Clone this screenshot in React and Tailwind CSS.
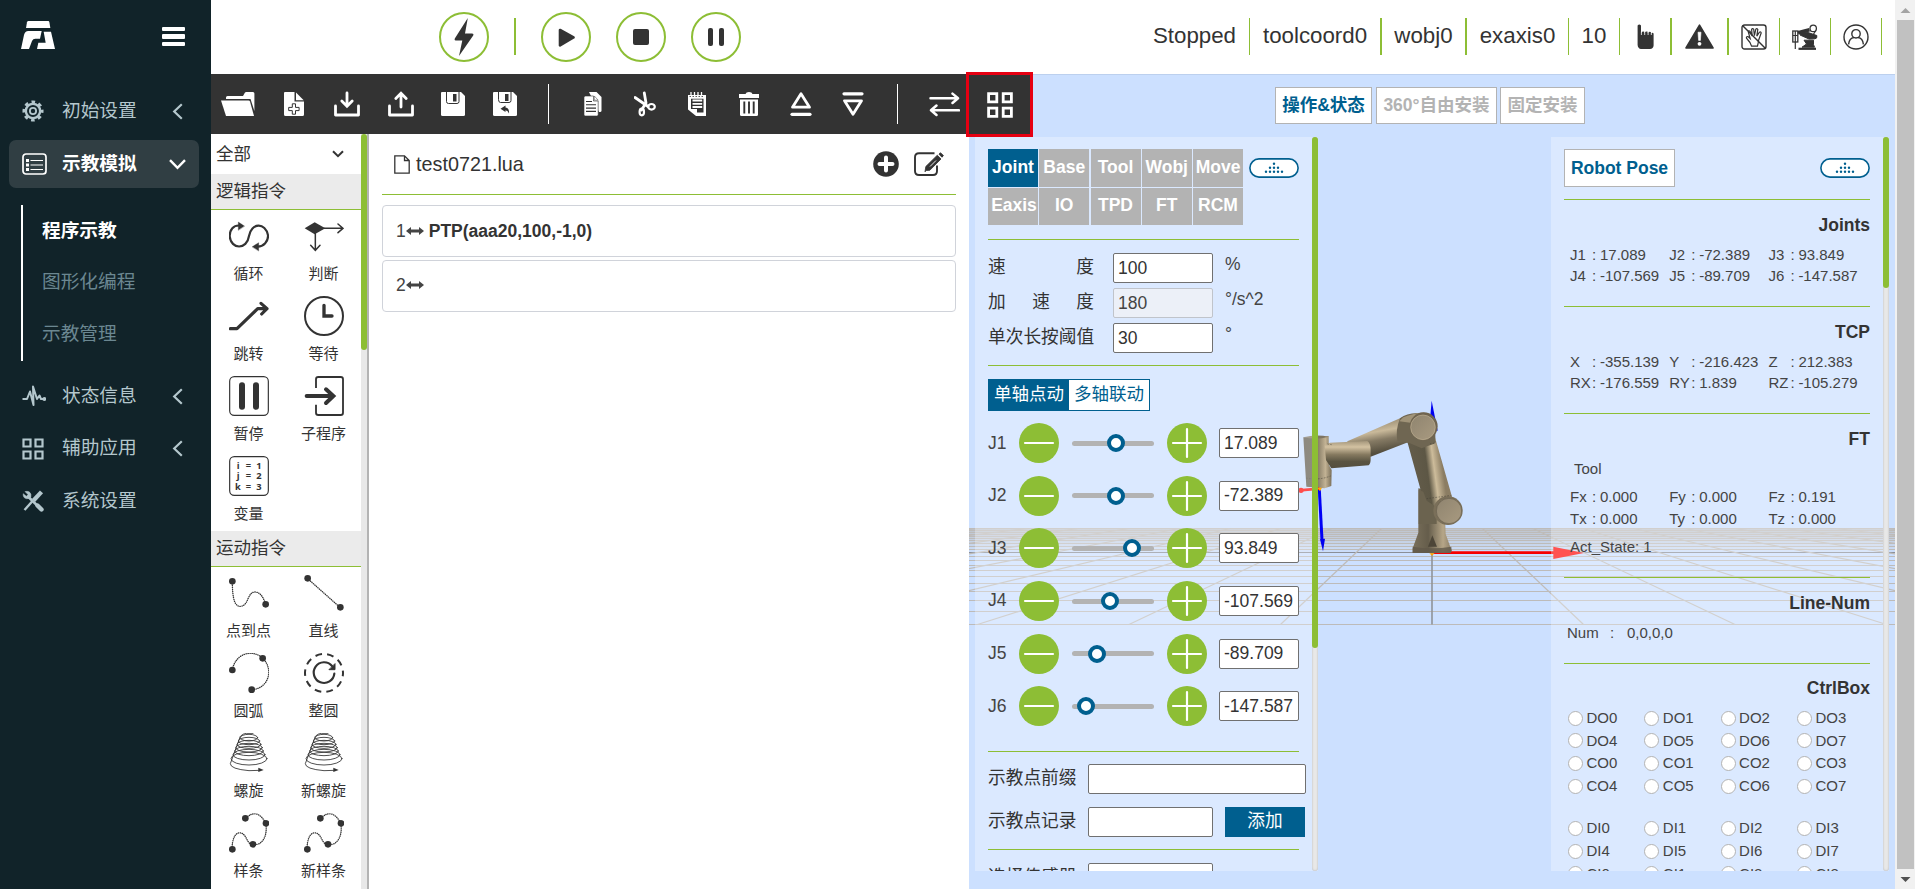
import React from "react";

const FONT = "font-['Liberation_Sans','Noto_Sans_CJK_SC',sans-serif]";

/* ---------- sidebar ---------- */
function Logo() {
  return (
    <svg className="h-[28px] w-[34px]" viewBox="0 0 102 84" fill="#fff">
      <path d="M22 0H82Q84 0 85 3L88 21H15L18 4Q19 0 22 0Z" />
      <path d="M22 30H62L57 53H43Q36 53 33 60L24 84H0L9 42Q12 30 22 30Z" />
      <path d="M68 32H90L102 84H48L52 65H74Z" />
    </svg>
  );
}
const GearIcon = () => (
  <svg className="size-[22px]" viewBox="0 0 24 24" fill="none" stroke="#b4c7cd">
    <circle cx="12" cy="12" r="7.8" strokeWidth="2.6" />
    <circle cx="12" cy="12" r="9.9" strokeWidth="3.2" strokeDasharray="3.9 3.875" strokeDashoffset="1.9" />
    <circle cx="12" cy="12" r="3.4" strokeWidth="2" />
  </svg>
);
const ListIcon = () => (
  <svg className="h-[22px] w-[25px]" viewBox="0 0 25 22" fill="none" stroke="#fff">
    <rect x="1" y="1" width="23" height="20" rx="3" strokeWidth="1.7" />
    <path d="M8.5 7.5H21M8.5 12H21M8.5 16.5H21" strokeWidth="1.2" />
    <path d="M4 7.5H7M4 12H7M4 16.5H7" strokeWidth="3" />
  </svg>
);
const PulseIcon = () => (
  <svg className="h-[22px] w-[24px]" viewBox="0 0 24 22" fill="none" stroke="#b4c7cd" strokeWidth="2" strokeLinejoin="round">
    <path d="M0.5 14H5L8 6.5L11.5 20L11 1.5L15 14L17.5 10.5L19 14H22" />
    <circle cx="22.3" cy="14" r="1" />
  </svg>
);
const SideGridIcon = () => (
  <svg className="size-[22px]" viewBox="0 0 22 22" fill="none" stroke="#b4c7cd" strokeWidth="2.2">
    <path d="M1.500 1.500h7v7h-7zM13.500 1.500h7v7h-7zM1.500 13.500h7v7h-7zM13.500 13.500h7v7h-7z" />
  </svg>
);
const ToolsIcon = () => (
  <svg className="size-[22px]" viewBox="0 0 22 22" fill="none" stroke="#b4c7cd">
    <path d="M6.5 7L16 16.2" strokeWidth="2.6" />
    <path d="M15.5 15.5L19.5 19.5" strokeWidth="4.4" strokeLinecap="round" />
    <path d="M3 1.6Q7.5 0.4 8.9 4.2Q9.6 6.8 7.6 8.2Q4.6 9.6 2.2 7.6Q0.9 6 1.2 3.7L4.4 6.3L6 4.6Z" fill="#b4c7cd" strokeWidth="0.5" />
    <path d="M2.5 20L11 10.5" strokeWidth="2.4" />
    <path d="M11.5 10.5L19.5 1.8" strokeWidth="4.2" />
  </svg>
);
const ChevLeft = () => (
  <svg className="h-[17px] w-[11px]" viewBox="0 0 11 17" fill="none" stroke="#b4c7cd" strokeWidth="2.2">
    <path d="M9.8 1.2L2.2 8.5L9.8 15.8" />
  </svg>
);

function SideItem({ icon, label, chevron, className }) {
  return (
    <div className={"flex items-center pl-[22px] " + className}>
      <span className="flex w-[40px]">{icon}</span>
      <span className="w-[110px] text-[18.7px] leading-none text-[#b4c7cd]">{label}</span>
      {chevron && <ChevLeft />}
    </div>
  );
}

function Sidebar() {
  return (
    <aside className="flex w-[211px] shrink-0 flex-col bg-[#112329]">
      <div className="flex h-[82px] items-start justify-between pt-[21px] pr-[26px] pl-[21px]">
        <Logo />
        <div className="mt-[6px] flex flex-col gap-[3px]">
          <i className="h-[4.4px] w-[23px] rounded-[1px] bg-white" />
          <i className="h-[4.4px] w-[23px] rounded-[1px] bg-white" />
          <i className="h-[4.4px] w-[23px] rounded-[1px] bg-white" />
        </div>
      </div>
      <SideItem icon={<GearIcon />} label="初始设置" chevron className="h-[58px]" />
      <div className="ml-[9px] flex h-[48px] w-[190px] items-center rounded-[7px] bg-[#303e43] pl-[13px]">
        <span className="flex w-[40px]"><ListIcon /></span>
        <span className="w-[107px] text-[18.7px] leading-none font-bold text-white">示教模拟</span>
        <svg className="h-[11px] w-[17px]" viewBox="0 0 17 11" fill="none" stroke="#fff" strokeWidth="2.4">
          <path d="M1 1.2L8.5 8.8L16 1.2" />
        </svg>
      </div>
      <div className="mt-[17px] ml-[21px] flex h-[156px] flex-col border-l-2 border-white pl-[19px] text-[18.7px] text-[#6b8791]">
        <span className="flex h-[51.5px] items-center font-bold text-white">程序示教</span>
        <span className="flex h-[51.5px] items-center">图形化编程</span>
        <span className="flex h-[51.5px] items-center">示教管理</span>
      </div>
      <SideItem icon={<PulseIcon />} label="状态信息" chevron className="mt-[9px] h-[52px]" />
      <SideItem icon={<SideGridIcon />} label="辅助应用" chevron className="h-[53px]" />
      <SideItem icon={<ToolsIcon />} label="系统设置" className="h-[52px]" />
    </aside>
  );
}

/* ---------- header ---------- */
function RoundButton({ children, className }) {
  return (
    <div className={"flex size-[50px] items-center justify-center rounded-full border-2 border-[#8dbe35] " + (className || "")}>
      {children}
    </div>
  );
}
const HandIcon = () => (
  <svg className="h-[25px] w-[17px]" viewBox="0 0 17 25" fill="#333">
    <path d="M0.600 1.500Q2.300 -0.500 4 1.500V9L5.200 7.800Q6.200 7 7.200 7.800V9L8.500 7.800Q9.700 7 10.700 7.800V9L12 8Q13 7.400 14 8.200V9.500Q15.500 8 16.600 9.500V21.500Q16.300 24.700 13 25H4Q1 24.700 0.600 21Z" />
    <path d="M4.400 7.500V11M7.700 8V11M11.100 8V11M14.300 8.500V11" stroke="#fff" strokeWidth="0.800" />
  </svg>
);
const WarnIcon = () => (
  <svg className="h-[25px] w-[29px]" viewBox="0 0 29 25">
    <path d="M14.5 1.2L28 24H1Z" fill="#333" stroke="#333" strokeWidth="1.6" strokeLinejoin="round" />
    <path d="M13 8.2h3l-.6 8.2h-1.8z" fill="#fff" stroke="#fff" strokeWidth="0.6" />
    <circle cx="14.5" cy="19.8" r="1.9" fill="#fff" />
  </svg>
);
const NoHandIcon = () => (
  <svg className="h-[26px] w-[26px]" viewBox="0 0 26 26" fill="none" stroke="#333" strokeWidth="1.4">
    <rect x="1" y="1" width="24" height="24" rx="2.5" />
    <path d="M1.5 1.5L24.5 24.5" />
    <path strokeWidth="1.2" d="M9 18.5L5.5 14.2Q5 12.2 7 12.6L9.2 14.6L7.3 8Q7.6 6.2 9 7.2L11.2 12L10.6 5.4Q11.4 3.8 12.7 5.2L13.4 11.6L14.8 5.2Q16 4 16.8 5.6L15.8 12.2L18.4 8.2Q20 7.4 20.2 9L17.6 16.2Q17.2 19.6 16.4 22.2H10.6Z" />
  </svg>
);
const RobotIcon = () => (
  <svg className="h-[26px] w-[26px]" viewBox="0 0 26 26" fill="none" stroke="#333">
    <rect x="0.800" y="7" width="5" height="11" strokeWidth="1.300" />
    <path d="M3.300 7V25M0.800 11.500H5.800" strokeWidth="1.200" />
    <path d="M6 8.800L17.500 5.800" strokeWidth="3.600" />
    <circle cx="21.200" cy="4.400" r="3.200" strokeWidth="1.300" />
    <path d="M23.500 7L21 11" strokeWidth="1.300" />
    <path d="M9 7.500L16 8.500L24.800 11.500Q25.500 14.500 23 14.800L17 15L8 11Z" fill="#333" />
    <path d="M12 16.200H21.500V20.500L22.500 23.200H10L14.500 20Z" fill="#333" />
    <path d="M6.500 24.800H24" strokeWidth="2.200" />
  </svg>
);
const UserIcon = () => (
  <svg className="h-[26px] w-[26px]" viewBox="0 0 26 26" fill="none" stroke="#333" strokeWidth="1.4">
    <circle cx="13" cy="13" r="12" />
    <circle cx="13" cy="9.800" r="4.200" />
    <path d="M5.600 20.400Q6.200 14 11 13.500M15 13.500Q19.800 14 20.400 20.400" />
  </svg>
);

function StatusCell({ children, className }) {
  return <div className={"flex h-[37px] items-center justify-center border-[#8dbe35] " + className}>{children}</div>;
}

function Header() {
  return (
    <header className="flex h-[74px] shrink-0 items-start bg-white">
      <div className="mt-[12px] ml-[228px] flex">
        <RoundButton>
          <svg className="h-[38px] w-[20px]" viewBox="0 0 20 38" fill="#333">
            <path d="M13.8 0L0.8 20.5Q0 22.4 1.6 22.4H8.3L5 38L19.2 17.6Q20 15.6 18 15.6H11Z" />
          </svg>
        </RoundButton>
        <i className="mt-[6px] ml-[25px] h-[37px] w-[2px] bg-[#8dbe35]" />
        <RoundButton className="ml-[25px]">
          <svg className="h-[19px] w-[17px]" viewBox="0 0 17 19">
            <path d="M2 2L15.5 9.5L2 17.4Z" fill="#333" stroke="#333" strokeWidth="2.6" strokeLinejoin="round" />
          </svg>
        </RoundButton>
        <RoundButton className="ml-[25px]">
          <i className="size-[16px] rounded-[2px] bg-[#333]" />
        </RoundButton>
        <RoundButton className="ml-[25px]">
          <span className="flex gap-[6px]">
            <i className="h-[18px] w-[5px] rounded-[2px] bg-[#333]" />
            <i className="h-[18px] w-[5px] rounded-[2px] bg-[#333]" />
          </span>
        </RoundButton>
      </div>
      <div className="mt-[18px] mr-[13px] ml-auto flex text-[22.3px] leading-none text-[#333]">
        <StatusCell className="w-[110px] border-r">Stopped</StatusCell>
        <StatusCell className="w-[132px] border-r-2">toolcoord0</StatusCell>
        <StatusCell className="w-[85px] border-r-2">wobj0</StatusCell>
        <StatusCell className="w-[102px] border-r">exaxis0</StatusCell>
        <StatusCell className="w-[51px] border-r">10</StatusCell>
        <StatusCell className="w-[52px] border-r-2"><HandIcon /></StatusCell>
        <StatusCell className="w-[57px] border-r-2"><WarnIcon /></StatusCell>
        <StatusCell className="w-[51px] border-r"><NoHandIcon /></StatusCell>
        <StatusCell className="w-[51px] border-r"><RobotIcon /></StatusCell>
        <StatusCell className="w-[51px] border-r"><UserIcon /></StatusCell>
      </div>
    </header>
  );
}

/* ---------- toolbar ---------- */
const Tb = ({ w, gap, children }) => (
  <svg className={"h-[26px] shrink-0 " + gap} width={w} height="26" viewBox={`0 0 ${w} 26`} fill="#fff">
    {children}
  </svg>
);

function Toolbar() {
  const dark = "#333";
  return (
    <div className="flex h-[60px] shrink-0 items-center bg-[#333] pb-[1px] pl-[10px]">
      <Tb w={34} gap="">
        <path d="M5 6.5Q5 5 6.5 5H22L24 1.5Q24.3 1 25.3 1H32Q33.4 1 33.4 2.6V20L29.5 8H5Z" />
        <path d="M0 9.5H27.5Q28.6 9.5 29 10.6L33 25H5Z" />
      </Tb>
      <Tb w={20} gap="ml-[29px]">
        <path d="M1 1H10.5V10.5H20V23.5Q20 25 18.5 25H1.5Q0 25 0 23.5V2Q0 1 1 1Z" />
        <path d="M12 1.4L19.7 9.2H12Z" />
        <path d="M8.3 12.8h3.2v3.6h3.6v3.2h-3.6v3.6h-3.2v-3.6H4.700v-3.200h3.600z" fill="none" stroke={dark} strokeWidth="1" />
      </Tb>
      <Tb w={26} gap="ml-[30px]">
        <path d="M1.500 15V24H24.500V15" fill="none" stroke="#fff" strokeWidth="2.8" strokeLinecap="round" strokeLinejoin="round" />
        <path d="M13 2V14M7.800 10L13 15.200L18.200 10" fill="none" stroke="#fff" strokeWidth="2.800" strokeLinecap="round" />
      </Tb>
      <Tb w={26} gap="ml-[28px]">
        <path d="M1.500 15V24H24.500V15" fill="none" stroke="#fff" strokeWidth="2.800" strokeLinecap="round" strokeLinejoin="round" />
        <path d="M13 16V4M7.800 7.500L13 2.200L18.200 7.500" fill="none" stroke="#fff" strokeWidth="2.800" strokeLinecap="round" />
      </Tb>
      <Tb w={24} gap="ml-[27px]">
        <path d="M1 1H20L24 5V23.500Q24 25 22.500 25H1.500Q0 25 0 23.500V2Q0 1 1 1Z" />
        <path d="M5.500 1V10.500Q5.500 12.500 7.500 12.500H16Q18 12.500 18 10.500V1" fill="none" stroke={dark} strokeWidth="1" />
        <rect x="12" y="3" width="3.500" height="7.500" fill={dark} />
      </Tb>
      <Tb w={24} gap="ml-[28px]">
        <path d="M1 1H20L24 5V23.500Q24 25 22.500 25H1.500Q0 25 0 23.500V2Q0 1 1 1Z" />
        <path d="M5.500 1V8.500Q5.500 11.500 7.500 11.500H16Q18 11.500 18 9.500V1" fill="none" stroke={dark} strokeWidth="1" />
        <rect x="12" y="3" width="3.500" height="7" fill={dark} />
        <path d="M7.500 17.800L12.500 14.500V16.500Q16.500 17 16 22.500Q15 19.500 12.500 19.200V21Z" fill={dark} />
      </Tb>
      <i className="ml-[31px] h-[40px] w-px shrink-0 bg-white" />
      <Tb w={18} gap="ml-[35px]">
        <path d="M5 1H12.500L17.500 6V19.500Q17.500 21 16 21H15" />
        <path d="M0 6.500Q0 5 1.500 5H9.500V10H14.200V23.500Q14.200 25 12.700 25H1.500Q0 25 0 23.500Z" stroke={dark} strokeWidth="0.600" />
        <path d="M10.300 5L14.200 9.200H10.300Z" stroke={dark} strokeWidth="0.500" />
        <path d="M2 10.500H8M2 13.800H12M2 17.100H12M2 20.400H12" stroke={dark} strokeWidth="1.100" />
      </Tb>
      <Tb w={22} gap="ml-[32px]">
        <path d="M1 6.500L14 15.500M10.300 2L12 12L7.500 19" fill="none" stroke="#fff" strokeWidth="2.800" strokeLinecap="round" />
        <ellipse cx="7.800" cy="21" rx="2.200" ry="3.300" fill="none" stroke="#fff" strokeWidth="2.200" />
        <ellipse cx="17.500" cy="15.800" rx="3.300" ry="2.800" fill="none" stroke="#fff" strokeWidth="2.200" />
      </Tb>
      <Tb w={18} gap="ml-[32px]">
        <path d="M0 4H18V25H8L0 18.500Z" />
        <path d="M3 1V6M6.500 1V6M10 1V6M13.500 1V6" stroke="#fff" strokeWidth="1.300" />
        <path d="M1.500 5.500H16" stroke={dark} strokeWidth="0.800" strokeDasharray="1.500 1.500" />
        <path d="M3 7.800H15.500V21.500H9V18H3Z" fill={dark} />
        <path d="M4.500 9.500H14.200M4.500 12.800H14.200M4.500 16H14.200" stroke="#fff" strokeWidth="1.800" />
      </Tb>
      <Tb w={20} gap="ml-[33px]">
        <path d="M0 3H6.500Q7 1 10 1T13.500 3H20V7H0Z" />
        <path d="M1 8.500H19V23.500Q19 25 17.500 25H2.500Q1 25 1 23.500Z" />
        <path d="M5.300 10.500V22.500M10 10.500V22.500M14.700 10.500V22.500" stroke={dark} strokeWidth="1.900" />
      </Tb>
      <Tb w={22} gap="ml-[31px]">
        <path d="M11 2.800L19.500 16.200H2.500Z" fill="none" stroke="#fff" strokeWidth="2.800" strokeLinejoin="round" />
        <path d="M2 23.300H20" stroke="#fff" strokeWidth="3.200" strokeLinecap="round" />
      </Tb>
      <Tb w={22} gap="ml-[30px]">
        <path d="M2 2.800H20" stroke="#fff" strokeWidth="3.200" strokeLinecap="round" />
        <path d="M11 23.300L2.500 9.800H19.500Z" fill="none" stroke="#fff" strokeWidth="2.800" strokeLinejoin="round" />
      </Tb>
      <i className="ml-[33px] h-[40px] w-px shrink-0 bg-white" />
      <Tb w={31} gap="ml-[31px]">
        <path d="M1.500 7.300H28M23.500 2.600L29 7.300L23.500 12M30 19.300H3M7.500 14.500L2 19.300L7.500 24" fill="none" stroke="#fff" strokeWidth="2.500" strokeLinecap="round" strokeLinejoin="round" />
      </Tb>
    </div>
  );
}

/* ---------- command library ---------- */
const S = ({ children }) => (
  <svg className="size-[40px]" viewBox="0 0 120 120" fill="none" stroke="#333" strokeLinecap="round">
    {children}
  </svg>
);
const dot = (x, y) => <circle key={x + "-" + y} cx={x} cy={y} r="10" fill="#333" stroke="none" />;

const Spiral = () => (
  <S>
    <g strokeWidth="2.600">
      <ellipse cx="60" cy="14" rx="26" ry="10" />
      <ellipse cx="60" cy="24" rx="32" ry="11" />
      <ellipse cx="60" cy="34" rx="36" ry="12" />
      <ellipse cx="60" cy="44" rx="40" ry="13" />
      <ellipse cx="60" cy="54" rx="43" ry="14" />
      <ellipse cx="60" cy="65" rx="48" ry="16" />
      <ellipse cx="60" cy="77" rx="54" ry="19" />
      <path d="M36 8Q42 2 52 1H72" />
      <path d="M34 10L4 92Q4 108 60 113L92 112" />
    </g>
    <path d="M104 111L88 104V117Z" fill="#333" stroke="none" />
  </S>
);
const Spline = () => (
  <S>
    <path d="M9 108C10 50 40 50 52 76C64 100 70 94 86 94C112 84 114 50 110 30C92 -4 70 -4 50 16" strokeWidth="4" strokeDasharray="1 5" />
    {dot(10, 109)}{dot(72, 94)}{dot(111, 31)}{dot(49, 16)}
  </S>
);

const LOGIC = [
  ["循环", <S key="a"><g strokeWidth="6.500">
    <path d="M36 29C12 25 2 44 2 60C6 102 54 102 60 60C66 20 110 18 117 58C118 76 104 92 86 92" />
    <path d="M46 30L28 18V42Z" fill="#333" strokeWidth="1" /><path d="M70 92L89 80V104Z" fill="#333" strokeWidth="1" /></g></S>],
  ["判断", <S key="b"><path d="M2 37L32 19L64 37L32 55Z" fill="#333" stroke="none" />
    <path d="M60 37H116M102 24L117 37L102 50M34 50V102M20 88L34 103L48 88" strokeWidth="4.500" /></S>],
  ["跳转", <S key="c"><path d="M4 98H24L86 38H112M96 22L114 38L98 54" strokeWidth="9.500" strokeLinejoin="round" /></S>],
  ["等待", <S key="d"><circle cx="60" cy="60" r="57" strokeWidth="6" /><path d="M60 28V60H84" strokeWidth="10" /></S>],
  ["暂停", <S key="e"><rect x="2" y="2" width="116" height="116" rx="14" strokeWidth="3.500" /><path d="M39 28V92M81 28V92" strokeWidth="18" /></S>],
  ["子程序", <S key="f"><path d="M36 36V10Q36 3 43 3H110Q117 3 117 10V110Q117 117 110 117H43Q36 117 36 110V86" strokeWidth="5.500" strokeLinecap="butt" />
    <path d="M8 60H84M66 40L88 60L66 81" strokeWidth="12" /></S>],
  ["变量", <svg key="g" className="size-[40px]" viewBox="0 0 120 120">
    <rect x="2" y="2" width="116" height="116" rx="14" fill="none" stroke="#333" strokeWidth="3.500" />
    <g fill="#333" fontFamily="Open Sans" fontWeight="700" fontSize="28">
      <text x="23" y="38">i</text><text x="50" y="38">=</text><text x="82" y="38">1</text>
      <text x="23" y="70">j</text><text x="50" y="70">=</text><text x="82" y="70">2</text>
      <text x="18" y="102">k</text><text x="50" y="102">=</text><text x="82" y="102">3</text>
    </g>
  </svg>],
];
const MOTION = [
  ["点到点", <S key="a"><path d="M10 25C10 80 18 102 36 100C60 96 54 58 78 57C96 58 104 76 110 94" strokeWidth="4" strokeDasharray="1 5" />{dot(10, 25)}{dot(110, 94)}</S>],
  ["直线", <S key="b"><path d="M10 16L108 103" strokeWidth="4" strokeDasharray="1 5" />{dot(11, 16)}{dot(109, 103)}</S>],
  ["圆弧", <S key="c"><path d="M10 50C20 0 70 -12 101 15C136 50 118 108 68 110" strokeWidth="4" strokeDasharray="1 5" />{dot(10, 51)}{dot(101, 16)}{dot(68, 110)}</S>],
  ["整圆", <S key="d"><circle cx="60" cy="60" r="57" strokeWidth="6" strokeDasharray="20 15.810" strokeDashoffset="10" strokeLinecap="butt" />
    <path d="M84 39A31 31 0 1 0 91 62" strokeWidth="6.500" /><path d="M93 33V50H76Z" fill="#333" strokeWidth="3" /></S>],
  ["螺旋", <Spiral key="e" />],
  ["新螺旋", <Spiral key="f" />],
  ["样条", <Spline key="g" />],
  ["新样条", <Spline key="h" />],
];

function CommandGroup({ title, items }) {
  return (
    <section className="pb-px">
      <h3 className="flex h-[36px] items-center border-b border-[#8dbe35] bg-[#ebebeb] pl-[5px] text-[17.5px] text-[#333]">{title}</h3>
      <div className="grid grid-cols-[75px_75px]">
        {items.map(([label, icon]) => (
          <div key={label} className="flex h-[80px] flex-col items-center pt-[6px]">
            {icon}
            <span className="mt-[10px] text-[15px] leading-[16px] text-[#333]">{label}</span>
          </div>
        ))}
      </div>
    </section>
  );
}

function Library() {
  return (
    <div className="flex w-[158px] shrink-0 overflow-hidden border-r-2 border-[#b3b3b3] bg-white">
      <div className="w-[150px]">
        <div className="flex h-[40px] items-center justify-between pr-[17px] pl-[5px] text-[17.5px] text-[#333]">
          全部
          <svg className="h-[8px] w-[12px]" viewBox="0 0 12 8" fill="none" stroke="#333" strokeWidth="2"><path d="M1 1.200L6 6.200L11 1.200" /></svg>
        </div>
        <CommandGroup title="逻辑指令" items={LOGIC} />
        <CommandGroup title="运动指令" items={MOTION} />
      </div>
      <div className="w-[6px] bg-[#e8e8e8]">
        <div className="h-[216px] w-[6px] rounded-full bg-[#8dbe35]" />
      </div>
    </div>
  );
}

/* ---------- editor ---------- */
const MoveGlyph = () => (
  <svg className="h-[8px] w-[18px]" viewBox="0 0 18 8" fill="#444">
    <path d="M0 4L5 0V2.600H13V0L18 4L13 8V5.400H5V8Z" />
  </svg>
);

function Editor() {
  return (
    <div className="flex grow flex-col bg-white px-[13px]">
      <div className="flex h-[61px] items-center border-b border-[#8dbe35] pl-[12px]">
        <svg className="mt-[1px] h-[19px] w-[16px]" viewBox="0 0 16 19" fill="none" stroke="#333" strokeWidth="1.300">
          <path d="M0.800 0.800H10.500L15.200 5.500V18.200H0.800ZM10.500 0.800V5.500H15.200" />
        </svg>
        <span className="mt-[2px] ml-[6px] text-[19.800px] leading-none text-[#333]">test0721.lua</span>
        <svg className="ml-auto size-[26px]" viewBox="0 0 26 26">
          <circle cx="13" cy="13" r="12.800" fill="#333" />
          <path d="M13 6.500V19.500M6.500 13H19.500" stroke="#fff" strokeWidth="4" strokeLinecap="round" />
        </svg>
        <svg className="mr-[12px] ml-[15px] h-[26px] w-[30px]" viewBox="0 0 30 26" fill="none" stroke="#333">
          <path d="M20.500 2.200H5Q1 2.200 1 6.200V20Q1 24 5 24H19Q23 24 23 20V14.500" strokeWidth="1.900" />
          <path d="M12.300 19.500L11 20.800L11.800 15.500L23.300 4.200L27 8L15.800 19.300Z" fill="#333" strokeWidth="0.800" />
          <path d="M25 3.200L26.500 1.800L29.300 4.600L28 6.200Z" fill="#333" strokeWidth="1" />
          <path d="M16 15.500L22 9.500" stroke="#fff" strokeWidth="0.900" />
        </svg>
      </div>
      <div className="mt-[10px] flex h-[52px] items-center rounded-[4px] border border-[#d0d3da] pl-[13px] text-[17.5px] text-[#444]">
        1<MoveGlyph />
        <b className="ml-[5px] text-[#333]">PTP(aaa20,100,-1,0)</b>
      </div>
      <div className="mt-[3px] flex h-[52px] items-center rounded-[4px] border border-[#d0d3da] pb-[2px] pl-[13px] text-[17.5px] text-[#444]">
        2<MoveGlyph />
      </div>
    </div>
  );
}

/* ---------- 3D scene ---------- */
const rows = Array.from({ length: 21 }, (_, n) => n);
const cols = Array.from({ length: 21 }, (_, k) => k - 10);

function Scene() {
  return (
    <svg className="absolute -top-px left-0" width="926" height="815" viewBox="969 74 926 815">
      <defs>
        <linearGradient id="wrist" x1="0" x2="1"><stop offset="0" stopColor="#5c574a" /><stop offset=".3" stopColor="#5f5948" /><stop offset=".5" stopColor="#857b65" /><stop offset=".78" stopColor="#c2b294" /><stop offset="1" stopColor="#7a6f59" /></linearGradient>
        <linearGradient id="fore" x1="0" x2="0" y1="0" y2="1"><stop offset="0" stopColor="#a5977c" /><stop offset=".22" stopColor="#d3c2a2" /><stop offset=".5" stopColor="#85795f" /><stop offset=".75" stopColor="#5a5442" /><stop offset="1" stopColor="#544e3e" /></linearGradient>
        <linearGradient id="fore2" x1=".4" x2=".6" y1=".2" y2=".85"><stop offset="0" stopColor="#9c8f75" /><stop offset=".32" stopColor="#c9b99a" /><stop offset=".6" stopColor="#857a64" /><stop offset="1" stopColor="#544e3e" /></linearGradient>
        <linearGradient id="upper" x1=".2" x2=".8" y1=".55" y2=".4"><stop offset="0" stopColor="#625b49" /><stop offset=".45" stopColor="#5d5745" /><stop offset=".7" stopColor="#cdbc9b" /><stop offset="1" stopColor="#8b7d63" /></linearGradient>
        <linearGradient id="base" x1="0" x2="1"><stop offset="0" stopColor="#7a705b" /><stop offset=".4" stopColor="#655d4b" /><stop offset=".78" stopColor="#b6a688" /><stop offset="1" stopColor="#8a7d66" /></linearGradient>
        <linearGradient id="cap" x1="0" x2="1" y1="0" y2="1"><stop offset="0" stopColor="#8f846f" /><stop offset="1" stopColor="#a89a80" /></linearGradient>
        <linearGradient id="haze" x1="0" x2="0" y1="0" y2="1"><stop offset="0" stopColor="#b9b9b9" stopOpacity=".75" /><stop offset="1" stopColor="#b9b9b9" stopOpacity="0" /></linearGradient>
      </defs>
      <rect x="969" y="528" width="926" height="26" fill="url(#haze)" />
      {rows.map((n) => {
        const y = Math.round(480.5 + 143.5 / (1 + 0.1 * n)) + 0.5;
        return <path key={n} d={`M969 ${y}H1895`} stroke={n === 10 ? "#8a8f98" : "#bdbbb9"} strokeWidth="1" />;
      })}
      {cols.map((k) => (
        <path key={k} d={`M${1432 + 50.5 * k} 528.500L${1432 + 151.5 * k} 624.500`} stroke={k === 0 ? "#8f9399" : "#bfbcb9"} strokeWidth={k === 0 ? 1.6 : 1.2} />
      ))}
      <g transform="translate(1290 380) scale(.33333)">
        <path d="M425 62L443 152H417Z" fill="#0000f0" />
        <path d="M430 518H792" stroke="#f60000" strokeWidth="8" />
        <path d="M790 500L882 519L790 537Z" fill="#ff0808" />
        {/* base and shoulder */}
        <path d="M385 325L410 330L466 435L467 462L485 512L482 518L368 519L368 505L385 458Z" fill="url(#base)" />
        <path d="M427 466L441 500H414Z" fill="#4d4638" />
        <path d="M368 500Q425 510 484 500L485 512L482 519L368 519Z" fill="#62594a" opacity=".8" />
        {/* upper arm */}
        <path d="M352 185L435 172L486 350L440 420Q400 400 392 330Z" fill="url(#upper)" />
        <path d="M386 330L400 335L410 362L440 382L440 432H386Z" fill="#6b634f" />
        <ellipse cx="474" cy="392" rx="44" ry="43" fill="#7a6f59" />
        <circle cx="477" cy="393" r="38" fill="url(#cap)" stroke="#5c5342" strokeWidth="1.500" />
        {/* forearm */}
        <path d="M172 184L330 115Q360 98 402 98L395 180L350 188L242 230L170 215Z" fill="url(#fore2)" />
        <path d="M330 115Q316 150 322 182L356 188L395 205L436 190V160L380 100Q350 100 330 115Z" fill="#6f6652" />
        <path d="M340 112Q370 98 405 98L372 130L328 124Z" fill="#a09378" />
        <circle cx="401" cy="139" r="42" fill="#6f6450" />
        <circle cx="399" cy="142" r="37" fill="url(#cap)" stroke="#d0c0a0" strokeWidth="1.500" />
        {/* wrist */}
        <path d="M40 172L116 168L117 255L125 270L124 318L104 325L49 320Z" fill="url(#wrist)" />
        <path d="M104 196L120 188L232 183Q243 190 242 215V238Q242 252 236 256L124 265L108 240Z" fill="url(#fore)" />
        <path d="M40 172Q78 162 116 170Q80 180 40 172Z" fill="#7d7462" />
        <path d="M48 294Q85 302 122 288M112 192L125 194M420 190Q425 196 438 184M410 356Q440 352 484 346" fill="none" stroke="#3f3a30" strokeWidth="1.500" strokeDasharray="5 4" />
        <path d="M28 331L88 326" stroke="#ff0000" strokeWidth="8" />
        <circle cx="33" cy="331" r="8" fill="#ff0000" />
        <path d="M88 330L96 480" stroke="#0000f6" strokeWidth="9" />
        <path d="M90 478L105 476L99 514Z" fill="#0000f0" />
        <path d="M82 323H96L90 334ZM418 520H434L426 527Z" fill="#ffa500" />
      </g>
    </svg>
  );
}

/* ---------- panels ---------- */
const Oval = () => (
  <svg className="h-[20px] w-[50px]" viewBox="0 0 50 20" fill="#005f8f">
    <rect x="0.900" y="0.900" width="48.200" height="18.200" rx="9.100" fill="#fff" stroke="#005f8f" strokeWidth="1.600" />
    {[17, 21, 25, 29, 33].map((x) => <circle key={x} cx={x} cy="13.800" r="1.200" />)}
    {[21, 25, 29].map((x) => <circle key={x} cx={x} cy="9.800" r="1.200" />)}
    <circle cx="25" cy="5.800" r="1.200" />
  </svg>
);

const FIELD = "h-[30px] rounded-[2px] border border-[#707070] bg-white pl-[4px] text-[17.5px] leading-none text-[#333] outline-none ";

function Spread({ text }) {
  return (
    <span className="flex w-[106px] justify-between text-[17.7px] leading-none text-[#333]">
      {text.split("").map((c) => <span key={c}>{c}</span>)}
    </span>
  );
}

const FIELDS = [["速度", "100", "%", "on"], ["加速度", "180", "°/s^2", "off"], ["单次长按阈值", "30", "°", "on"]];
const JOINTS = [["J1", "17.089", 35], ["J2", "-72.389", 35], ["J3", "93.849", 51], ["J4", "-107.569", 28.5], ["J5", "-89.709", 15.5], ["J6", "-147.587", 4.5]];

function Sign({ plus }) {
  return (
    <svg className="size-[40px]" viewBox="0 0 40 40">
      <circle cx="20" cy="20" r="20" fill="#8dbe35" />
      <path d={plus ? "M6 20H34M20 6V34" : "M6 20H34"} stroke="#fff" strokeWidth="2.200" strokeLinecap="round" />
    </svg>
  );
}

function JogPanel() {
  return (
    <div className="relative flex h-[734px] w-[343px] overflow-hidden bg-white/30">
      <div className="flex w-[337px] shrink-0 flex-col pt-[12px] pl-[13px]">
        <div className="flex h-[76px] shrink-0">
          <div className="grid grid-cols-[50px_50px_50px_50px_50px] grid-rows-[38px_37px] gap-x-[1.250px] gap-y-px text-[17.5px] font-bold text-white">
            {["Joint", "Base", "Tool", "Wobj", "Move", "Eaxis", "IO", "TPD", "FT", "RCM"].map((t, i) => (
              <span key={t} className={"flex items-center justify-center pb-[2px] " + (i === 0 ? "bg-[#005f8f]" : "bg-[#b3b3b3]") + (i === 5 ? " pl-[2px]" : "")}>{t}</span>
            ))}
          </div>
          <div className="mt-[9px] ml-[6px]"><Oval /></div>
        </div>
        <i className="mt-[14px] h-px w-[311px] shrink-0 bg-[#8dbe35]" />
        <div className="mt-[13px] flex shrink-0 flex-col gap-[5px]">
          {FIELDS.map(([l, v, u, k]) => (
            <div key={l} className="flex h-[30px] items-center">
              <Spread text={l} />
              <input readOnly defaultValue={v} className={"ml-[19px] w-[100px] shrink-0 " + (k === "off" ? "h-[30px] rounded-[2px] border border-[#c0c4cb] bg-[#ecf0f8] pl-[4px] text-[17.5px] leading-none text-[#444] outline-none" : FIELD)} />
              <span className="mb-[6px] ml-[12px] text-[17.5px] leading-none text-[#444]">{u}</span>
            </div>
          ))}
        </div>
        <i className="mt-[12px] h-px w-[311px] shrink-0 bg-[#8dbe35]" />
        <div className="mt-[13px] flex h-[32px] w-[162px] shrink-0 border border-[#005f8f] bg-white text-[17.5px] text-[#005f8f]">
          <span className="flex w-[80px] items-center justify-center bg-[#005f8f] pb-[1px] text-white">单轴点动</span>
          <span className="flex w-[80px] items-center justify-center pb-[1px]">多轴联动</span>
        </div>
        <div className="mt-[6px] flex shrink-0 flex-col">
          {JOINTS.map(([j, v, p]) => (
            <div key={j} className="flex h-[52.600px] items-center">
              <span className="w-[31px] text-[17.5px] leading-none text-[#444]">{j}</span>
              <Sign />
              <div className="relative mx-[13px] h-[5px] w-[82px] rounded-full bg-[#b3b3b3]">
                <i className="absolute top-[-6.500px] size-[18px] rounded-full border-4 border-[#005f8f] bg-white" style={{ left: p }} />
              </div>
              <Sign plus />
              <input readOnly defaultValue={v} className={"ml-[12px] w-[80px] " + FIELD} />
            </div>
          ))}
        </div>
        <i className="mt-[18px] h-px w-[311px] shrink-0 bg-[#8dbe35]" />
        <div className="mt-[12.500px] flex h-[30px] shrink-0 items-center">
          <span className="w-[100px] text-[17.7px] leading-none text-[#333]">示教点前缀</span>
          <input readOnly className={"w-[218px] " + FIELD} />
        </div>
        <div className="mt-[13px] flex h-[30px] shrink-0 items-center">
          <span className="w-[100px] text-[17.7px] leading-none text-[#333]">示教点记录</span>
          <input readOnly className={"w-[125px] " + FIELD} />
          <span className="ml-[12px] flex h-[30px] w-[80px] items-center justify-center bg-[#005f8f] pb-[2px] text-[17.7px] text-white">添加</span>
        </div>
        <i className="mt-[12px] h-px w-[311px] shrink-0 bg-[#8dbe35]" />
        <div className="mt-[13px] flex h-[30px] shrink-0 items-center">
          <span className="w-[100px] text-[17.7px] leading-none text-[#333]">选择传感器</span>
          <input readOnly className={"w-[125px] " + FIELD} />
        </div>
      </div>
      <div className="h-full w-[6px] shrink-0 rounded-full bg-[#e8e8e8] shadow-[inset_0_0_2px_rgba(0,0,0,0.25)]">
        <div className="h-[511px] rounded-full bg-[#8dbe35]" />
      </div>
    </div>
  );
}

const Title = ({ children, className }) => (
  <h4 className={"text-right text-[17.5px] leading-[20px] font-bold text-[#333] " + (className || "")}>{children}</h4>
);
function Values({ data, pitch }) {
  return (
    <div className="ml-[6px] grid grid-cols-[99.200px_99.200px_99.200px] text-[15px] text-[#444]">
      {data.map(([l, v]) => (
        <div key={l} className={"flex items-center whitespace-nowrap " + pitch}>
          <span className="w-[22px]">{l}</span>
          <span className="w-[8px]">:</span>
          <span>{v}</span>
        </div>
      ))}
    </div>
  );
}
function Lamps({ names }) {
  return (
    <div className="ml-[4px] grid grid-cols-[76.300px_76.300px_76.300px_76.300px] text-[15px] text-[#444]">
      {names.map((n) => (
        <div key={n} className="flex h-[22.600px] items-center gap-[3.500px]">
          <i className="size-[15px] rounded-full border border-[#b3b3b3] bg-white" />
          {n}
        </div>
      ))}
    </div>
  );
}
const Rule = ({ className }) => <i className={"block h-px w-[306px] shrink-0 bg-[#8dbe35] " + className} />;

function PosePanel() {
  return (
    <div className="relative flex h-[734px] w-[338px] overflow-hidden bg-white/30">
      <div className="flex h-[734px] w-[332px] shrink-0 flex-col pt-[12px] pr-[13px] pl-[13px]">
        <div className="flex h-[38px] shrink-0 items-center justify-between">
          <span className="flex h-[38px] w-[111px] items-center justify-center border border-[#b3b3b3] bg-white text-[17.5px] font-bold text-[#005f8f]">Robot Pose</span>
          <Oval />
        </div>
        <Rule className="mt-[12px]" />
        <Title className="mt-[15px]">Joints</Title>
        <div className="mt-[10px]"><Values pitch="h-[21px]" data={[["J1", "17.089"], ["J2", "-72.389"], ["J3", "93.849"], ["J4", "-107.569"], ["J5", "-89.709"], ["J6", "-147.587"]]} /></div>
        <Rule className="mt-[19px]" />
        <Title className="mt-[15px]">TCP</Title>
        <div className="mt-[10px]"><Values pitch="h-[21px]" data={[["X", "-355.139"], ["Y", "-216.423"], ["Z", "212.383"], ["RX", "-176.559"], ["RY", "1.839"], ["RZ", "-105.279"]]} /></div>
        <Rule className="mt-[19px]" />
        <Title className="mt-[15px]">FT</Title>
        <span className="mt-[10px] ml-[10px] text-[15px] leading-[20px] text-[#444]">Tool</span>
        <div className="mt-[7px]"><Values pitch="h-[22px]" data={[["Fx", "0.000"], ["Fy", "0.000"], ["Fz", "0.191"], ["Tx", "0.000"], ["Ty", "0.000"], ["Tz", "0.000"]]} /></div>
        <span className="mt-[7px] ml-[6px] text-[15px] leading-[20px] text-[#444]">Act_State: 1</span>
        <Rule className="mt-[20px]" />
        <Title className="mt-[15px]">Line-Num</Title>
        <div className="mt-[10px] ml-[3px] flex text-[15px] leading-[20px] text-[#444]">
          <span className="w-[43px]">Num</span><span className="w-[17px]">:</span><span>0,0,0,0</span>
        </div>
        <Rule className="mt-[20px]" />
        <Title className="mt-[14px]">CtrlBox</Title>
        <div className="mt-[9px]"><Lamps names={["DO0", "DO1", "DO2", "DO3", "DO4", "DO5", "DO6", "DO7", "CO0", "CO1", "CO2", "CO3", "CO4", "CO5", "CO6", "CO7"]} /></div>
        <div className="mt-[20px]"><Lamps names={["DI0", "DI1", "DI2", "DI3", "DI4", "DI5", "DI6", "DI7", "CI0", "CI1", "CI2", "CI3"]} /></div>
      </div>
      <div className="h-full w-[6px] shrink-0 rounded-full bg-[#e8e8e8] shadow-[inset_0_0_2px_rgba(0,0,0,0.25)]">
        <div className="h-[151px] rounded-full bg-[#8dbe35]" />
      </div>
    </div>
  );
}

function Viewport() {
  return (
    <div className="relative flex w-[926px] shrink-0 flex-col border-t border-[#bcd0ee] bg-[#cce0ff]">
      <Scene />
      <div className="absolute top-[-3px] left-[-3px] flex h-[65px] w-[67px] items-center justify-center border-3 border-[#e60012] bg-[#333]">
        <svg className="size-[26px]" viewBox="0 0 26 26" fill="none" stroke="#fff" strokeWidth="2.800">
          <path d="M1.600 1.600h8.200v8.200H1.600zM16.200 1.600h8.200v8.200h-8.200zM1.600 16.200h8.200v8.200H1.600zM16.200 16.200h8.200v8.200h-8.200z" />
        </svg>
      </div>
      <div className="relative mt-[12px] ml-[306px] flex text-[17.5px] font-bold text-[#b3b3b3]">
        <span className="flex h-[37px] w-[97px] items-center justify-center border border-[#b3b3b3] bg-white text-[#005f8f]">操作&amp;状态</span>
        <span className="ml-[4px] flex h-[37px] w-[121px] items-center justify-center border border-[#b3b3b3] bg-white">360°自由安装</span>
        <span className="ml-[3px] flex h-[37px] w-[85px] items-center justify-center border border-[#b3b3b3] bg-white">固定安装</span>
      </div>
      <div className="mt-[13px] flex justify-between pr-[6px] pl-[6px]">
        <JogPanel />
        <PosePanel />
      </div>
    </div>
  );
}

function WindowScrollbar() {
  return (
    <div className="flex w-[20px] shrink-0 flex-col items-center bg-[#f1f1f1]">
      <svg className="h-[20px] w-[20px]" viewBox="0 0 20 20"><path d="M5.500 13H15.500L10.500 8Z" fill="#a3a3a3" /></svg>
      <div className="ml-[1px] w-[17px] grow bg-[#c1c1c1]" />
      <svg className="h-[20px] w-[20px]" viewBox="0 0 20 20"><path d="M5.500 8H15.500L10.500 13Z" fill="#505050" /></svg>
    </div>
  );
}

export default function App() {
  return (
    <div className={"flex h-[889px] w-[1915px] overflow-hidden bg-white " + FONT}>
      <Sidebar />
      <main className="flex w-[1684px] shrink-0 flex-col">
        <Header />
        <div className="flex h-[815px]">
          <div className="flex w-[758px] shrink-0 flex-col">
            <Toolbar />
            <div className="flex h-[755px]">
              <Library />
              <Editor />
            </div>
          </div>
          <Viewport />
        </div>
      </main>
      <WindowScrollbar />
    </div>
  );
}
